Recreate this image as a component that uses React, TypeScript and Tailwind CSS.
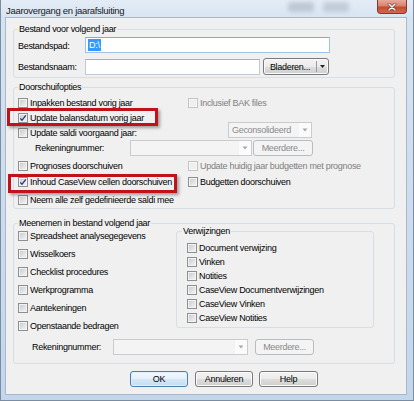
import React from "react";

type CheckProps = {
  label: string;
  checked?: boolean;
  disabled?: boolean;
  className?: string;
};

function Box({ checked = false, disabled = false }: { checked?: boolean; disabled?: boolean }) {
  return (
    <span
      className={
        disabled
          ? "flex h-[10px] w-[10px] shrink-0 items-center justify-center border border-[#c4c4c4] bg-[#efefef] shadow-[inset_0_0_0_1px_#f7f7f7]"
          : "flex h-[10px] w-[10px] shrink-0 items-center justify-center border border-[#8e8f8f] bg-[linear-gradient(135deg,#c4c8cd,#f7f7f7)] shadow-[inset_0_0_0_1px_#f2f2f2]"
      }
    >
      {checked && (
        <svg width="8" height="8" viewBox="0 0 8 8">
          <path d="M1.3 4.3 L3 6.3 L6.8 1.4" stroke="#1d3478" strokeWidth="1.3" fill="none" />
        </svg>
      )}
    </span>
  );
}

function Check({ label, checked, disabled, className = "" }: CheckProps) {
  return (
    <div className={`flex items-center gap-[2px] ${className}`}>
      <Box checked={checked} disabled={disabled} />
      <span className={disabled ? "whitespace-nowrap text-[#808080]" : "whitespace-nowrap text-black"}>{label}</span>
    </div>
  );
}

function Combo({ className = "", text = "" }: { className?: string; text?: string }) {
  return (
    <div className={`flex h-[16px] items-center border border-[#c9cbce] bg-[#f4f4f4] ${className}`}>
      <span className="flex-1 whitespace-nowrap pl-[3px] text-[#8a8a8a]">{text}</span>
      <span className="flex h-full w-[12px] items-center justify-center bg-[#fbfbfb]">
        <svg width="6" height="4" viewBox="0 0 6 4">
          <path d="M0.5 0.5 L5.5 0.5 L3 3.5 Z" fill="#a8a8a8" />
        </svg>
      </span>
    </div>
  );
}

function Btn({ label, className = "", disabled = false, primary = false }: { label: string; className?: string; disabled?: boolean; primary?: boolean }) {
  const look = disabled
    ? "border-[#b9bdc0] bg-[#f4f4f4] text-[#8a8a8a]"
    : primary
      ? "border-[#4a7fb0] bg-[linear-gradient(#f2f8fd_0%,#e6f1fb_50%,#d4e7f6_51%,#c6def2_100%)] text-black shadow-[inset_0_0_0_1px_#dff0fc]"
      : "border-[#7a7a7a] bg-[linear-gradient(#f3f3f3_0%,#ebebeb_50%,#dddddd_51%,#cfcfcf_100%)] text-black shadow-[inset_0_0_0_1px_#fafafa]";
  return (
    <div className={`flex h-[16px] items-center justify-center rounded-[3px] border ${look} ${className}`}>
      <span className="whitespace-nowrap">{label}</span>
    </div>
  );
}

export default function App() {
  return (
    <div className="h-[401px] w-[414px] overflow-hidden bg-[#f5f5f5] font-['Liberation_Sans',Arial,sans-serif] text-[9px] leading-[12px] tracking-[-0.3px] text-black">
      <div className="relative flex h-full w-full flex-col border-x border-b border-[#7b8da2] bg-[linear-gradient(180deg,#e3ecf6_0px,#d6e3f1_20px,#c3d6ec_100%)] pb-[5px] pl-[4px] pr-[6px]">
        {/* title bar */}
        <div className="relative flex h-[17px] items-start justify-between">
          <span className="mt-[5px] pl-[1px] text-[9.5px] leading-[12px] text-[#1a1a1a]">Jaarovergang en jaarafsluiting</span>
          <div className="pointer-events-none absolute left-[283px] top-[2px] h-[10px] w-[26px] rounded-[3px] bg-[#8d99a6] opacity-40 blur-[2px]" />
          <div className="pointer-events-none absolute left-[318px] top-[2px] h-[10px] w-[26px] rounded-[3px] bg-[#8d99a6] opacity-35 blur-[2px]" />
          <div className="relative flex h-[14px] w-[30px] items-center justify-center rounded-b-[4px] border border-t-0 border-[#7d3b30] bg-[linear-gradient(#e9a99b_0%,#d98370_45%,#c6492f_55%,#d5674c_100%)]">
            <svg width="10" height="8" viewBox="0 0 10 8">
              <path d="M2 1 L8 7 M8 1 L2 7" stroke="#5b2a22" strokeWidth="2.6" strokeLinecap="round" />
              <path d="M2 1 L8 7 M8 1 L2 7" stroke="#ffffff" strokeWidth="1.5" strokeLinecap="round" />
            </svg>
          </div>
        </div>

        {/* client area */}
        <div className="relative flex-1 border border-[#a9b8ca] bg-[#f0f0f0]">
          {/* group 1 */}
          <fieldset className="ml-[7px] mt-[5px] w-[382px] rounded-[3px] border border-[#d5dfe5] pb-[2px] pl-[4px]">
            <legend className="px-[1px] leading-[12px]">Bestand voor volgend jaar</legend>
            <div className="mt-[2px] flex h-[16px] items-center">
              <span className="mt-[2px] w-[67px]">Bestandspad:</span>
              <div className="flex h-[16px] w-[245px] items-center border border-[#a3c2e3] border-t-[#87a9d0] bg-white pl-[2px]">
                <span className="bg-[#3399ff] px-[1px] leading-[12px] text-white">D:\</span>
              </div>
            </div>
            <div className="mt-[5px] flex h-[17px] items-center">
              <span className="mt-[1px] w-[67px]">Bestandsnaam:</span>
              <div className="h-[16px] w-[175px] border border-[#c5c8cf] border-t-[#abadb3] bg-white" />
              <div className="ml-[3px] flex h-[17px] w-[66px] items-center rounded-[3px] border border-[#7a7a7a] bg-[linear-gradient(#f3f3f3_0%,#ebebeb_50%,#dddddd_51%,#cfcfcf_100%)] shadow-[inset_0_0_0_1px_#fafafa]">
                <span className="flex-1 text-center">Bladeren...</span>
                <span className="h-[11px] w-px bg-[#9a9a9a]" />
                <span className="flex w-[11px] justify-center">
                  <svg width="5" height="3" viewBox="0 0 5 3">
                    <path d="M0 0 L5 0 L2.5 3 Z" fill="#222" />
                  </svg>
                </span>
              </div>
            </div>
          </fieldset>

          {/* group 2 */}
          <fieldset className="ml-[7px] mt-[3px] w-[382px] rounded-[3px] border border-[#d5dfe5] pb-[1px] pl-[4px]">
            <legend className="px-[1px] leading-[12px]">Doorschuifopties</legend>
            <div className="mt-[2px] flex h-[15px] items-center">
              <Check className="w-[170px]" label="Inpakken bestand vorig jaar" />
              <Check disabled label="Inclusief BAK files" />
            </div>
            <div className="flex h-[15px] items-center">
              <Check checked label="Update balansdatum vorig jaar" />
            </div>
            <div className="flex h-[15px] items-center">
              <Check className="w-[210px]" label="Update saldi voorgaand jaar:" />
              <Combo className="-mt-[6px] w-[84px]" text="Geconsolideerd" />
            </div>
            <div className="flex h-[16px] items-center pl-[17px]">
              <span className="w-[95px]">Rekeningnummer:</span>
              <Combo className="w-[122px]" />
              <Btn disabled className="ml-[1px] w-[60px]" label="Meerdere..." />
            </div>
            <div className="mt-[2px] flex h-[16px] items-center">
              <Check className="w-[170px]" label="Prognoses doorschuiven" />
              <Check disabled label="Update huidig jaar budgetten met prognose" />
            </div>
            <div className="flex h-[16px] items-center">
              <Check checked className="w-[170px]" label="Inhoud CaseView cellen doorschuiven" />
              <Check label="Budgetten doorschuiven" />
            </div>
            <div className="mt-[3px] flex h-[14px] items-center">
              <Check label="Neem alle zelf gedefinieerde saldi mee" />
            </div>
          </fieldset>

          {/* group 3 */}
          <fieldset className="ml-[7px] mt-[8px] w-[382px] rounded-[3px] border border-[#d5dfe5] pb-[8px] pl-[4px]">
            <legend className="px-[1px] leading-[12px]">Meenemen in bestand volgend jaar</legend>
            <div className="flex items-start">
              <div className="mt-[2px] flex w-[158px] flex-col gap-[8px]">
                <Check className="h-[10px]" label="Spreadsheet analysegegevens" />
                <Check className="h-[10px]" label="Wisselkoers" />
                <Check className="h-[10px]" label="Checklist procedures" />
                <Check className="h-[10px]" label="Werkprogramma" />
                <Check className="h-[10px]" label="Aantekeningen" />
                <Check className="h-[10px]" label="Openstaande bedragen" />
              </div>
              <fieldset className="-mt-[4px] w-[198px] rounded-[3px] border border-[#d5dfe5] pb-[2px] pl-[5px]">
                <legend className="px-[1px] leading-[12px]">Verwijzingen</legend>
                <div className="mt-[4px] flex flex-col pl-[5px]">
                  <Check className="h-[14px]" label="Document verwijzing" />
                  <Check className="h-[14px]" label="Vinken" />
                  <Check className="h-[14px]" label="Notities" />
                  <Check className="h-[14px]" label="CaseView Documentverwijzingen" />
                  <Check className="h-[14px]" label="CaseView Vinken" />
                  <Check className="h-[14px]" label="CaseView Notities" />
                </div>
              </fieldset>
            </div>
            <div className="mt-[8px] flex h-[16px] items-center pl-[14px]">
              <span className="w-[81px]">Rekeningnummer:</span>
              <Combo className="w-[135px]" />
              <Btn disabled className="ml-[7px] w-[59px]" label="Meerdere..." />
            </div>
          </fieldset>

          {/* buttons */}
          <div className="ml-[124px] mt-[7px] flex">
            <Btn primary className="w-[58px]" label="OK" />
            <Btn className="ml-[7px] w-[58px]" label="Annuleren" />
            <Btn className="ml-[6px] w-[59px]" label="Help" />
          </div>

          {/* red highlight annotations */}
          <div className="pointer-events-none absolute left-[1px] top-[90px] h-[18px] w-[151px] border-[3px] border-[#c1121c] shadow-[2px_2px_3px_rgba(0,0,0,0.35)]" />
          <div className="pointer-events-none absolute left-[2px] top-[156px] h-[19px] w-[169px] border-[3px] border-[#c1121c] shadow-[2px_2px_3px_rgba(0,0,0,0.35)]" />
        </div>
      </div>
    </div>
  );
}
